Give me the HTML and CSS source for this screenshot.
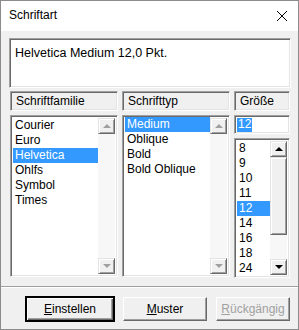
FILE: index.html
```html
<!DOCTYPE html>
<html lang="de">
<head>
  <meta charset="UTF-8">
  <title>Schriftart</title>
  <link rel="stylesheet" href="styles.css">
</head>
<body>
  <div class="dialog">
    <div class="titlebar">
      <span class="title">Schriftart</span>
      <svg class="close" width="12" height="12" viewBox="0 0 12 12">
        <path d="M1 1 L11 11 M11 1 L1 11" stroke="#000" stroke-width="1" fill="none"/>
      </svg>
    </div>

    <div class="content">
      <div class="preview sunken">Helvetica Medium 12,0 Pkt.</div>

      <div class="columns">
        <div class="col col-family">
          <div class="head sunken">Schriftfamilie</div>
          <div class="listbox sunken">
            <ul class="items">
              <li>Courier</li>
              <li>Euro</li>
              <li class="selected">Helvetica</li>
              <li>Ohlfs</li>
              <li>Symbol</li>
              <li>Times</li>
            </ul>
            <div class="scrollbar disabled">
              <div class="sb-btn"><span class="tri up"></span></div>
              <div class="track"></div>
              <div class="sb-btn"><span class="tri down"></span></div>
            </div>
          </div>
        </div>

        <div class="col col-style">
          <div class="head sunken">Schrifttyp</div>
          <div class="listbox sunken">
            <ul class="items">
              <li class="selected">Medium</li>
              <li>Oblique</li>
              <li>Bold</li>
              <li>Bold Oblique</li>
            </ul>
            <div class="scrollbar disabled">
              <div class="sb-btn"><span class="tri up"></span></div>
              <div class="track"></div>
              <div class="sb-btn"><span class="tri down"></span></div>
            </div>
          </div>
        </div>

        <div class="col col-size">
          <div class="head sunken">Größe</div>
          <div class="edit sunken"><span class="edit-sel">12</span></div>
          <div class="listbox sunken size-list">
            <ul class="items">
              <li>8</li>
              <li>9</li>
              <li>10</li>
              <li>11</li>
              <li class="selected">12</li>
              <li>14</li>
              <li>16</li>
              <li>18</li>
              <li>24</li>
            </ul>
            <div class="scrollbar">
              <div class="sb-btn"><span class="tri up"></span></div>
              <div class="thumb"></div>
              <div class="track"></div>
              <div class="sb-btn"><span class="tri down"></span></div>
            </div>
          </div>
        </div>
      </div>
    </div>

    <div class="footer">
      <button class="btn default"><u>E</u>instellen</button>
      <button class="btn btn-muster"><u>M</u>uster</button>
      <button class="btn btn-undo" disabled><u>R</u>ückgängig</button>
    </div>
  </div>
</body>
</html>
```

FILE: styles.css
```css
* {
  box-sizing: border-box;
}

body {
  margin: 0;
  background: #fff;
  font-family: 'Liberation Sans', Arial, sans-serif;
  font-size: 12px;
  color: #000;
}

.dialog {
  width: 299px;
  height: 330px;
  border: 1px solid #8c8c8c;
  background: #f0f0f0;
  display: flex;
  flex-direction: column;
}

.titlebar {
  height: 30px;
  background: #fff;
  display: flex;
  align-items: center;
  justify-content: space-between;
  padding: 0 10px 0 8px;
}

.title {
  font-size: 12px;
  padding-bottom: 2px;
}

.close {
  display: block;
  margin-bottom: 1px;
}

/* 3D sunken frame */
.sunken {
  border: 1px solid;
  border-color: #a0a0a0 #fff #fff #a0a0a0;
  box-shadow: inset 1px 1px #696969, inset -1px -1px #e3e3e3;
}

.content {
  padding: 7px 7px 0 8px;
  height: 256px;
  border-bottom: 1px solid #a0a0a0;
}

.preview {
  height: 50px;
  background: #fff;
  padding: 7px 5px;
  font-size: 12.5px;
}

.columns {
  display: flex;
  gap: 4px;
  margin-top: 3px;
  padding-left: 1px;
}

.col {
  display: flex;
  flex-direction: column;
  gap: 4px;
}

.col-family,
.col-style {
  width: 108px;
}

.col-size {
  width: 56px;
}

.head {
  height: 20px;
  padding: 3px 5px;
  line-height: 13px;
}

.listbox {
  height: 162px;
  background: #fff;
  display: flex;
  padding: 2px;
}

.size-list {
  height: 140px;
}

.edit {
  height: 19px;
  background: #fff;
  padding: 2px 2px;
  line-height: 13px;
}

.edit-sel {
  display: inline-block;
  background: #3399ff;
  color: #fff;
  padding: 0 1px;
  height: 14px;
}

.items {
  list-style: none;
  margin: 0;
  padding: 0;
  flex: 1;
}

.items li {
  height: 15px;
  line-height: 15px;
  padding-left: 2px;
}

.items li.selected {
  background: #3399ff;
  color: #fff;
}

.col-style .items li:first-child {
  margin-top: -1px;
}

.scrollbar {
  width: 17px;
  display: flex;
  flex-direction: column;
  background: #f7f7f7;
}

.sb-btn {
  height: 16px;
  background: #f0f0f0;
  border: 1px solid;
  border-color: #e3e3e3 #696969 #696969 #e3e3e3;
  box-shadow: inset 1px 1px #fff, inset -1px -1px #a0a0a0;
  display: flex;
  align-items: center;
  justify-content: center;
}

.track {
  flex: 1;
}

.thumb {
  height: 78px;
  background: #f0f0f0;
  border: 1px solid;
  border-color: #e3e3e3 #696969 #696969 #e3e3e3;
  box-shadow: inset 1px 1px #fff, inset -1px -1px #a0a0a0;
}

.tri {
  width: 0;
  height: 0;
  border-left: 4px solid transparent;
  border-right: 4px solid transparent;
}

.tri.up {
  border-bottom: 4px solid #000;
}

.tri.down {
  border-top: 4px solid #000;
}

.disabled .tri.up {
  border-bottom-color: #a0a0a0;
}

.disabled .tri.down {
  border-top-color: #a0a0a0;
}

.footer {
  flex: 1;
  border-top: 1px solid #fff;
  display: flex;
  align-items: flex-start;
  padding: 9px 0 0 25px;
  gap: 9px;
}

.btn {
  height: 24px;
  background: #f0f0f0;
  font-family: 'Liberation Sans', Arial, sans-serif;
  font-size: 12px;
  color: #000;
  border: 1px solid;
  border-color: #fff #696969 #696969 #fff;
  box-shadow: inset -1px -1px #a0a0a0;
  padding: 0;
}

.btn.default {
  width: 88px;
  outline: 1px solid #000;
  outline-offset: 0;
  border-color: #000;
  box-shadow: inset 1px 1px #fff, inset -1px -1px #696969, inset -2px -2px #a0a0a0;
}

.btn-muster {
  width: 84px;
}

.btn-undo {
  width: 74px;
  color: #a0a0a0;
}
```
